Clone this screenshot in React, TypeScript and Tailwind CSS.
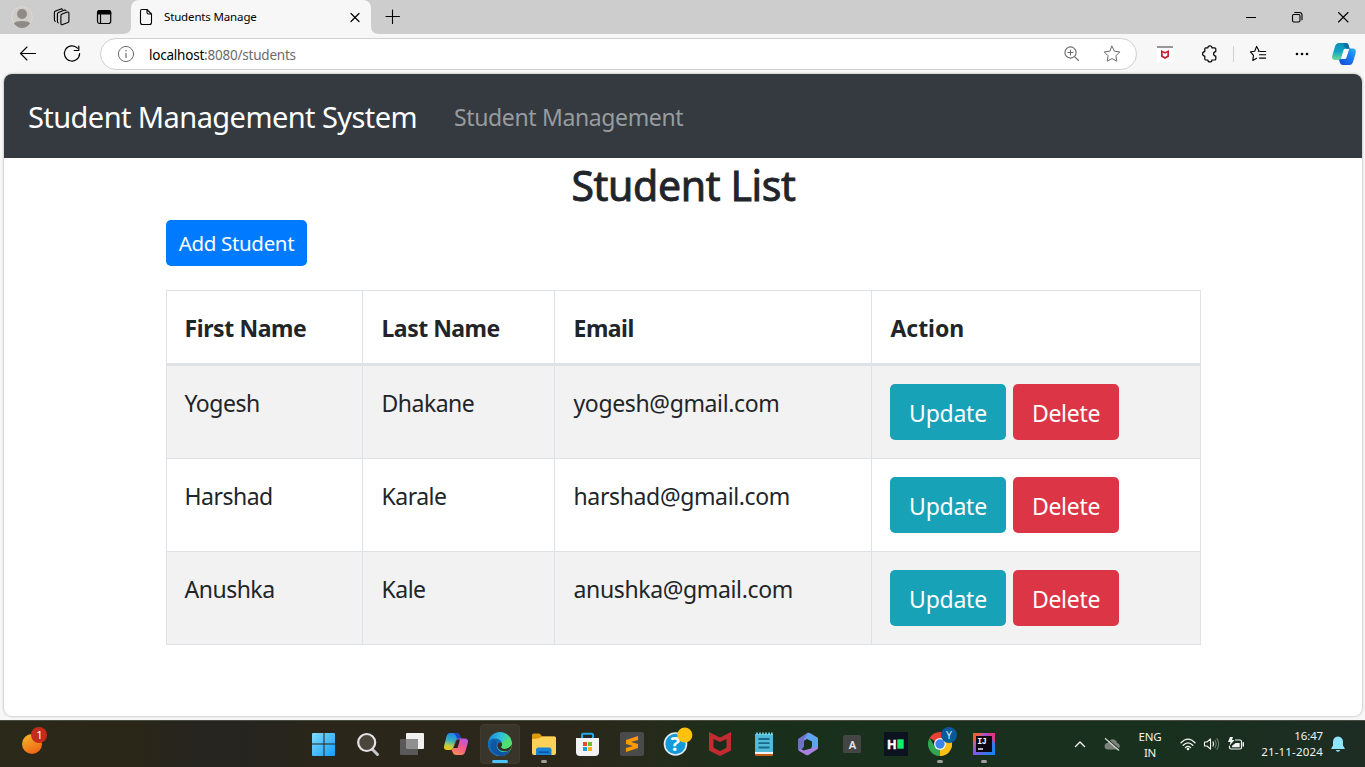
import React from "react";

type IconProps = { children: React.ReactNode; w?: number; h?: number; className?: string };

function Icon({ children, w = 24, h = 24, className }: IconProps) {
  return (
    <svg
      width={w}
      height={h}
      viewBox={`0 0 ${w} ${h}`}
      fill="none"
      stroke="currentColor"
      strokeLinecap="round"
      strokeLinejoin="round"
      className={className}
    >
      {children}
    </svg>
  );
}

function TabStrip() {
  return (
    <div className="flex h-[34px] bg-[#cdcdcd] text-black">
      <div className="flex w-[131px] items-center pl-[10px]">
        <Icon className="shrink-0">
          <circle cx="12" cy="12" r="10.3" fill="#cfcbc6" stroke="#dedbd8" />
          <circle cx="12" cy="9" r="5" fill="#8f8a85" stroke="none" />
          <path d="M3.8 18.2Q6 16 12 16T20.2 18.2Q17 23 12 23T3.8 18.2Z" fill="#8f8a85" stroke="none" />
        </Icon>
        <Icon className="ml-[16px] shrink-0">
          <path d="M11.7 9.3 17.2 7.1Q18.9 6.6 18.9 8.2V16Q18.9 17 18 17.4L12.6 19.6Q10.9 20 10.9 18.4V10.7Q10.9 9.7 11.7 9.3Z" strokeWidth="1.1" />
          <path d="M8.3 17.9Q7.4 17.5 7.4 16.3V9.3Q7.4 8.1 8.5 7.6L14.6 5.1Q15.6 4.8 15.9 5.7" strokeWidth="1.1" />
          <path d="M5.3 16.4Q4.4 16 4.4 14.8V7.8Q4.4 6.6 5.5 6.1L11 3.9Q12 3.6 12.4 4.4" strokeWidth="1.1" />
        </Icon>
        <Icon className="ml-[18px] shrink-0">
          <rect x="5.5" y="5.5" width="13.2" height="13" rx="2.2" strokeWidth="1.2" />
          <path d="M5 9.5V7.5Q5 5 7.5 5H16.7Q19.2 5 19.2 7.5V9.5Z" fill="currentColor" stroke="none" />
          <path d="M8.5 9V18" strokeWidth="1.2" />
        </Icon>
      </div>
      <div className="relative flex w-[240px] items-center rounded-t-[8px] bg-[#f7f7f7]">
        <svg className="absolute -left-[8px] bottom-0" width="8" height="8" viewBox="0 0 8 8">
          <path d="M8 0V8H0Q8 8 8 0Z" fill="#f7f7f7" />
        </svg>
        <svg className="absolute -right-[8px] bottom-0" width="8" height="8" viewBox="0 0 8 8">
          <path d="M0 0V8H8Q0 8 0 0Z" fill="#f7f7f7" />
        </svg>
        <Icon w={14} h={18} className="ml-[8px] shrink-0">
          <path d="M3 1.5H8L12.5 6V14.5Q12.5 16.5 10.5 16.5H3.5Q1.5 16.5 1.5 14.5V3Q1.5 1.5 3 1.5ZM8 1.5V4.5Q8 6 9.5 6H12.5" strokeWidth="1.1" />
        </Icon>
        <span className="ml-[11px] w-[185px] shrink-0 text-[11.5px] leading-4 tracking-[-0.15px] whitespace-nowrap">Students Manage</span>
        <Icon w={12} h={12} className="shrink-0">
          <path d="M2 2.5 10 10.5M10 2.5 2 10.5" strokeWidth="1.2" />
        </Icon>
      </div>
      <div className="flex flex-1 items-center">
        <Icon w={16} h={16} className="ml-[14px]">
          <path d="M1 7.5H14.5M7.5 1V14.5" strokeWidth="1.1" />
        </Icon>
      </div>
      <div className="flex items-center pr-[14px]">
        <Icon w={16} h={16} className="mr-[30px]">
          <path d="M3 8.5H13" strokeLinecap="butt" strokeWidth="1" />
        </Icon>
        <Icon w={16} h={16} className="mr-[30px]">
          <rect x="3.5" y="5.5" width="7.5" height="7.5" rx="1.4" strokeWidth="1.1" />
          <path d="M5.7 3.5H10.5Q13 3.5 13 6V10.7" strokeWidth="1.1" />
        </Icon>
        <Icon w={16} h={16}>
          <path d="M3.5 3.5 13 13M13 3.5 3.5 13" strokeWidth="1.1" />
        </Icon>
      </div>
    </div>
  );
}

function Toolbar() {
  return (
    <div className="flex h-[40px] items-center bg-[#f7f7f7] text-black">
      <Icon w={20} h={20} className="ml-[18px]">
        <path d="M2.8 9.5H17.5M9 3 2.5 9.5 9 16" strokeWidth="1.1" />
      </Icon>
      <Icon w={20} h={20} className="ml-[24px]">
        <path d="M15.5 4.2A7.6 7.6 0 1 0 17.6 9.5M16.8 2.2V6.5H12.2" strokeWidth="1.2" />
      </Icon>
      <div className="ml-[18px] flex h-[32px] w-[1037px] items-center rounded-full border border-[#d0d0d0] bg-white text-[#6b6b6b]">
        <Icon w={18} h={18} className="ml-[16px]">
          <circle cx="9" cy="9" r="7.6" strokeWidth="1" />
          <path d="M9 8.5V12.5" strokeWidth="1.2" />
          <circle cx="9" cy="5.8" r="0.8" fill="currentColor" stroke="none" />
        </Icon>
        <span className="ml-[14px] flex-1 pt-[1px] text-[13.5px] leading-5 tracking-[-0.22px]">
          <span className="text-black">localhost</span>:8080/students
        </span>
        <Icon w={20} h={20} className="mr-[20px]">
          <circle cx="8.5" cy="8.5" r="5.6" strokeWidth="1.1" />
          <path d="M12.8 12.8 16.5 16.5M6 8.5H11M8.5 6V11" strokeWidth="1.1" />
        </Icon>
        <Icon w={20} h={20} className="mr-[14px]">
          <path d="M10 2.2 12.4 7.2 17.8 7.9 13.9 11.8 14.8 17.2 10 14.6 5.2 17.2 6.1 11.8 2.2 7.9 7.6 7.2Z" strokeWidth="1" />
        </Icon>
      </div>
      <svg width="16" height="16" viewBox="0 0 16 16" className="ml-[20px]">
        <rect width="16" height="16" fill="#fff" />
        <rect width="16" height="2" fill="#9b9797" />
        <path d="M4 4 8 6 12 4V10.7L8 13 4 10.7Z" fill="#c8202f" />
        <path d="M5.7 6.6 8 7.8 10.3 6.6V9.6L8 11 5.7 9.6Z" fill="#fff" />
      </svg>
      <Icon w={20} h={20} className="ml-[27px]">
        <path d="M4.8 4.8Q4.8 3.8 5.8 3.8H7.9A2 2 0 0 1 11.9 3.8H14.5Q15.8 3.8 15.8 4.8V7.6A2.2 2.2 0 0 0 15.8 12V15Q15.8 16 14.8 16H11.9A2 2 0 0 1 7.9 16H5.8Q4.8 16 4.8 15V12A2.2 2.2 0 0 1 4.8 7.6Z" strokeWidth="1.2" />
      </Icon>
      <div className="ml-[13px] h-[16px] w-px bg-[#cfcfcf]" />
      <Icon w={20} h={20} className="ml-[14px]">
        <path d="M10.3 7.2H11.2L8.6 2.4 6.7 7.2 2.5 7.8 5.5 11.4 4.8 16.4 8.6 14.3M12.3 7.5H17.7M11.5 10.8H17.7M11.5 14.1H17.7" strokeWidth="1.1" />
      </Icon>
      <svg width="16" height="16" viewBox="0 0 16 16" className="ml-[26px]">
        <circle cx="3" cy="8" r="1.3" />
        <circle cx="8" cy="8" r="1.3" />
        <circle cx="13" cy="8" r="1.3" />
      </svg>
      <svg width="26" height="24" viewBox="0 0 26 24" className="ml-[21px]">
        <defs>
          <linearGradient id="cpa" x1="0" y1="0" x2="0" y2="1">
            <stop offset="0" stopColor="#0a8fb4" />
            <stop offset="0.5" stopColor="#11a5c8" />
            <stop offset="1" stopColor="#6fdc93" />
          </linearGradient>
          <linearGradient id="cpb" x1="0" y1="1" x2="1" y2="0">
            <stop offset="0" stopColor="#1447d8" />
            <stop offset="0.6" stopColor="#1c7df2" />
            <stop offset="1" stopColor="#26b5ee" />
          </linearGradient>
        </defs>
        <path d="M8 1H15Q17 1 17.6 3L18.5 6.5H15Q13 6.5 12.3 9L10.5 15.5Q9.8 18 7.5 18H4Q0.3 18 1.3 13.5L4 4.5Q5 1 8 1Z" fill="url(#cpa)" />
        <path d="M18.5 23H12Q9.5 23 8.8 20.5L8 17.8Q10 17.5 10.6 15.5L13 8.5Q13.7 6.5 16 6.5H21.5Q25.7 6.5 24.7 11L22.2 19.5Q21 23 18.5 23Z" fill="url(#cpb)" />
        <path d="M12.3 9Q13 6.8 15 6.7L18.2 7 15.5 15.5Q15 17 13.5 17H10Z" fill="#fff" />
        <path d="M12 1H15Q17 1 17.6 3L18.6 6.7H15.5Q14 6.7 13 4Z" fill="#0b6fa8" />
      </svg>
    </div>
  );
}

const students = [
  { first: "Yogesh", last: "Dhakane", email: "yogesh@gmail.com" },
  { first: "Harshad", last: "Karale", email: "harshad@gmail.com" },
  { first: "Anushka", last: "Kale", email: "anushka@gmail.com" },
];

function StudentTable() {
  const th = "h-[75px] border-r border-b-[3px] border-[#dee2e6] pl-[18.5px] pt-[2px] text-left font-bold tracking-[-0.5px]";
  const td = "h-[93px] border-r border-b border-[#dee2e6] pl-[18.5px] pt-[19px] align-top";
  return (
    <table className="mt-[24px] w-[1035px] table-fixed border-separate border-spacing-0 border-t border-l border-[#dee2e6] text-[23px] leading-[36px] tracking-[-0.36px]">
      <colgroup>
        <col className="w-[196px]" />
        <col className="w-[192px]" />
        <col className="w-[317px]" />
        <col className="w-[329px]" />
      </colgroup>
      <thead>
        <tr>
          <th className="h-[75px] border-r border-b-[3px] border-[#dee2e6] pt-[2px] pl-[17.5px] text-left font-bold tracking-[-0.4px]">First Name</th>
          <th className={th}>Last Name</th>
          <th className={th}>Email</th>
          <th className="h-[75px] border-r border-b-[3px] border-[#dee2e6] pt-[2px] pl-[18.5px] text-left font-bold tracking-[-0.05px]">Action</th>
        </tr>
      </thead>
      <tbody>
        {students.map((s) => (
          <tr key={s.email} className="odd:bg-[#f2f2f2]">
            <td className="h-[93px] border-r border-b border-[#dee2e6] pt-[19px] pl-[17.5px] align-top tracking-[-0.5px]">{s.first}</td>
            <td className="h-[93px] border-r border-b border-[#dee2e6] pt-[19px] pl-[18.5px] align-top tracking-[-0.5px]">{s.last}</td>
            <td className={td}>{s.email}</td>
            <td className="h-[93px] border-r border-b border-[#dee2e6] pt-[18px] pl-[18px] align-top text-white">
              <div className="flex gap-[7px]">
                <button className="h-[56px] w-[116px] rounded-[5px] bg-[#17a2b8] pt-[2px] tracking-[-0.25px]">Update</button>
                <button className="h-[56px] w-[106px] rounded-[5px] bg-[#dc3545] pt-[2px] tracking-[-0.3px]">Delete</button>
              </div>
            </td>
          </tr>
        ))}
      </tbody>
    </table>
  );
}

function Page() {
  return (
    <div className="h-[646px] bg-[#f7f7f7] pr-[3px] pl-[4px]">
      <div className="h-[642px] overflow-hidden rounded-[8px] bg-white text-[#212529] shadow-[0_0_2px_1px_rgba(0,0,0,0.16)]">
        <nav className="flex h-[84px] items-center bg-[#343a40] pl-[24px] whitespace-nowrap">
          <span className="w-[426px] pt-[1px] text-[29px] leading-[45px] tracking-[-0.57px] text-white">Student Management System</span>
          <span className="pt-[1px] text-[23px] leading-[36px] tracking-[-0.36px] text-[#999c9f]">Student Management</span>
        </nav>
        <main className="flex flex-col items-start pl-[162px]">
          <h2 className="h-[62px] w-[1035px] pt-[1px] text-center text-[41px] leading-[52px] font-normal tracking-[-0.35px] [-webkit-text-stroke:0.9px_#212529]">
            Student List
          </h2>
          <button className="h-[46px] w-[141px] rounded-[5px] bg-[#007bff] text-[20.5px] leading-[30px] tracking-[-0.33px] text-white">
            Add Student
          </button>
          <StudentTable />
        </main>
      </div>
    </div>
  );
}

type AppEntry = { name: string; art: React.ReactNode; active?: boolean; running?: boolean };

const apps: AppEntry[] = [
  {
    name: "Start",
    art: (
      <g fill="url(#win)">
        <path d="M3 3H13.5V13.5H2V4Q2 3 3 3Z M14.5 3H24Q25 3 25 4V13.5H14.5Z M2 14.5H13.5V26H3Q2 26 2 25Z M14.5 14.5H25V25Q25 26 24 26H14.5Z" />
      </g>
    ),
  },
  {
    name: "Search",
    art: (
      <g>
        <path d="M18.5 19.5 23.5 24.5" stroke="#c5c7cb" strokeWidth="3" strokeLinecap="round" />
        <circle cx="12.7" cy="12.5" r="8.5" fill="#4a463b" stroke="#e2e3e6" strokeWidth="2.2" />
      </g>
    ),
  },
  {
    name: "Task view",
    art: (
      <g>
        <rect x="8" y="3" width="18" height="16" rx="1" fill="#f1f1f1" />
        <rect x="2" y="9" width="18" height="16" rx="1" fill="#59595a" />
        <path d="M8 9H19Q20 9 20 10V19H9Q8 19 8 18Z" fill="#8f8f8f" />
      </g>
    ),
  },
  {
    name: "Copilot",
    art: (
      <g>
        <path d="M8 3H14.5Q17 3 18 6L19 9H16.5Q14 9 13.3 11.5L11.3 17.5Q10.5 20 8 20H5.5Q1 20 2.2 15.5L4.5 6.5Q5.5 3 8 3Z" fill="url(#pilotA)" />
        <path d="M12 3H14.5Q17 3 18 6L19 9H16Q14.5 8 13.8 5.5Z" fill="#1b45c4" />
        <path d="M19.5 25H14Q11.5 25 10.5 22L9.5 19.6Q11 19 11.6 17L14 10.5Q15 8.5 17.5 8.5H22.5Q27 8.5 25.8 13L23.5 21Q22.5 25 19.5 25Z" fill="url(#pilotB)" />
        <path d="M14.8 9.5H18L15.5 18H11.5Z" fill="#2b2518" />
      </g>
    ),
  },
  {
    name: "Edge",
    active: true,
    art: (
      <g>
        <circle cx="14" cy="14" r="12" fill="url(#edgeA)" />
        <path d="M2 14Q2.5 8.5 8.5 8.5Q15 8.7 16 13.3Q13 10.7 11 14.5Q9.7 18 13.5 21Q18 23.8 24.3 20Q20.5 26 14 26Q3 25 2 14Z" fill="#1267b5" />
        <path d="M8.5 9.5Q4 12.5 5 18Q7 24.5 14.5 26Q21 26 24.3 20Q18 23.8 13.5 21Q9 17.8 11 14Z" fill="#1055a2" />
        <path d="M15.5 12.8Q17 14.4 15.5 16.6Q15 18.6 19 18.7Q24 18.3 26 14Q25.8 19 22.3 20.7Q16 22.5 12.7 19.2Q10 15.8 12.3 13Q14 11.6 15.5 12.8Z" fill="#353022" />
        <path d="M15.5 12.8Q17 14.4 15.6 16.5Q15 18.5 19 18.7Q24.5 18.2 26 13.5L22 9Z" fill="#4fdf70" />
      </g>
    ),
  },
  {
    name: "File Explorer",
    running: true,
    art: (
      <g>
        <path d="M2 5Q2 3.5 3.5 3.5H9Q10 3.5 11 5L12 6.5H24Q26 6.5 26 8.5V15H2Z" fill="#dc9a0a" />
        <path d="M2 9Q10 8.5 12 6.5H24.5Q26 6.5 26 8V23Q26 25 24 25H4Q2 25 2 23Z" fill="#fbd257" />
        <path d="M6 25V20Q6 17.5 8.5 17.5H19Q21.5 17.5 21.5 20V25Z" fill="#1683d7" />
        <path d="M8.5 22.2H19" stroke="#0b56a8" strokeWidth="1.6" />
      </g>
    ),
  },
  {
    name: "Store",
    art: (
      <g>
        <path d="M8 9V5Q8 3.8 9.2 3.8H17.8Q19 3.8 19 5V9" fill="none" stroke="#2aa9e8" strokeWidth="2" />
        <path d="M2 8H25V22Q25 26 21 26H6Q2 26 2 22Z" fill="#f3f3f4" />
        <path d="M9 12H13V16H9Z" fill="#e54b26" />
        <path d="M14 12H18V16H14Z" fill="#74b728" />
        <path d="M9 17H13V21H9Z" fill="#169fe2" />
        <path d="M14 17H18V21H14Z" fill="#f7b410" />
      </g>
    ),
  },
  {
    name: "Editor",
    art: (
      <g>
        <rect x="2" y="2" width="24" height="24" rx="2" fill="#4a4a4b" />
        <path d="M20 6 8 10V14L15 16 8 18V22L20 18V14L13 12 20 10Z" fill="#ff9a06" />
      </g>
    ),
  },
  {
    name: "Help",
    art: (
      <g>
        <circle cx="13.5" cy="14" r="11" fill="#1499da" stroke="#e7eef2" strokeWidth="1.6" />
        <text x="13.2" y="21.3" textAnchor="middle" fontSize="20" fontWeight="700" fill="#fff">?</text>
        <circle cx="22.8" cy="5" r="7.6" fill="#ffc20c" />
      </g>
    ),
  },
  {
    name: "Shield",
    art: (
      <g>
        <path d="M3 2 14 7.5 25 2V20.5L14 26 3 20.5Z" fill="#c22b30" />
        <path d="M7.5 9 14 12 20.5 9V17.8L14 21 7.5 17.8Z" fill="#1c2c1a" />
      </g>
    ),
  },
  {
    name: "Notepad",
    art: (
      <g>
        <path d="M5 22H23V25Q23 26 22 26H6Q5 26 5 25Z" fill="#c25b1b" />
        <rect x="5" y="21" width="18" height="3" fill="#f2f2f2" />
        <path d="M5 4H23V22H5Z" fill="#51bad8" />
        <path d="M7 2.5V5M10 2.5V5M13 2.5V5M16 2.5V5M19 2.5V5M21.8 2.5V5" stroke="#7bdcee" strokeWidth="1.6" />
        <path d="M8.5 9H19.5M8.5 13.2H19.5M8.5 17.5H19.5" stroke="#166b8b" strokeWidth="1.8" />
      </g>
    ),
  },
  {
    name: "Microsoft 365",
    art: (
      <g>
        <path d="M14 2.5 17 3.5 24 8V15L17.5 13 14 8.5 9 12V18L6 19.5 4.2 17V9Z" fill="#8087dc" />
        <path d="M14 3 24 8V18.5L19.5 21.5 17.5 19.5V12L11.5 8.5Z" fill="#5ca6f0" />
        <path d="M4 17 9.5 20.5 24 16.5V18.5L14.5 25Q13.5 25.5 12 25L4.5 20.5Z" fill="#a982e0" />
        <path d="M4.5 9.5 14 3 10 8V17L5.5 19.8 4 18Z" fill="#6d72c4" />
        <path d="M13 9 18 11.5V16.5L13.5 19 10 17V11Z" fill="#18301c" />
      </g>
    ),
  },
  {
    name: "Keyboard",
    art: (
      <g>
        <rect x="5" y="5" width="18" height="18" rx="1.5" fill="#454545" />
        <text x="14.5" y="19" textAnchor="middle" fontSize="11" fontWeight="600" fill="#e7eaec">A</text>
      </g>
    ),
  },
  {
    name: "H",
    art: (
      <g>
        <rect x="2" y="2" width="24" height="24" fill="#0c1320" />
        <text x="9.9" y="18.5" textAnchor="middle" fontSize="12.6" fontWeight="700" fill="#fff" stroke="#fff" strokeWidth="0.5" fontFamily="Liberation Sans, sans-serif">H</text>
        <rect x="15.3" y="9.3" width="6.4" height="9.4" fill="#10ef67" />
      </g>
    ),
  },
  {
    name: "Chrome",
    running: true,
    art: (
      <g>
        <path d="M14 14 3.6 8A12 12 0 0 1 24.4 8Z" fill="#e94235" />
        <path d="M14 14 24.4 8A12 12 0 0 1 14 26Z" fill="#fbc116" />
        <path d="M14 14 14 26A12 12 0 0 1 3.6 8L9 17Z" fill="#31a552" />
        <path d="M14 8H24.4A12 12 0 0 1 26 14Q26 20 21 23.7L14 26 19.2 17Z" fill="#fbc116" />
        <circle cx="14" cy="14" r="6" fill="#f3f6f4" />
        <circle cx="14" cy="14" r="4.7" fill="#3e82ee" />
        <circle cx="23" cy="5" r="8" fill="#08599b" />
        <text x="23" y="9" textAnchor="middle" fontSize="10.5" fill="#d7edf7">Y</text>
      </g>
    ),
  },
  {
    name: "IntelliJ",
    running: true,
    art: (
      <g>
        <rect x="3" y="3" width="22" height="22" fill="url(#ij)" />
        <path d="M3 3H12L3 13Z" fill="#ef5b42" />
        <path d="M25 3V13L16 3Z" fill="#d8388c" />
        <rect x="6" y="6" width="16" height="16" fill="#0d0714" />
        <text x="7.3" y="13.7" fontSize="8.2" fontWeight="700" fill="#fff" fontFamily="Liberation Mono, monospace" letterSpacing="-0.4">IJ</text>
        <path d="M8 19H13" stroke="#fff" strokeWidth="1.4" />
      </g>
    ),
  },
];

function Gradients() {
  return (
    <svg width="0" height="0" className="absolute">
      <defs>
        <linearGradient id="win" x1="0" y1="0" x2="1" y2="1">
          <stop offset="0" stopColor="#7fdcff" />
          <stop offset="1" stopColor="#149cf6" />
        </linearGradient>
        <linearGradient id="pilotA" x1="0.5" y1="0" x2="0.3" y2="1">
          <stop offset="0" stopColor="#1e83ea" />
          <stop offset="0.45" stopColor="#33b1c4" />
          <stop offset="0.75" stopColor="#b5d04a" />
          <stop offset="1" stopColor="#f6c513" />
        </linearGradient>
        <linearGradient id="pilotB" x1="0.8" y1="0" x2="0.3" y2="1">
          <stop offset="0" stopColor="#b556ea" />
          <stop offset="0.5" stopColor="#f2588f" />
          <stop offset="1" stopColor="#fb8a55" />
        </linearGradient>
        <linearGradient id="edgeA" x1="0" y1="0.3" x2="1" y2="0.5">
          <stop offset="0" stopColor="#1d8bd8" />
          <stop offset="0.5" stopColor="#2fbfe0" />
          <stop offset="1" stopColor="#5be35e" />
        </linearGradient>
        <linearGradient id="ij" x1="0" y1="0" x2="1" y2="0.8">
          <stop offset="0" stopColor="#f78a2a" />
          <stop offset="0.4" stopColor="#9b4ee0" />
          <stop offset="1" stopColor="#0f86ef" />
        </linearGradient>
        <linearGradient id="sun" x1="0.2" y1="0" x2="0.7" y2="1">
          <stop offset="0" stopColor="#f5b729" />
          <stop offset="1" stopColor="#ee6211" />
        </linearGradient>
      </defs>
    </svg>
  );
}

function AppButton({ entry }: { entry: AppEntry }) {
  return (
    <div className="flex w-[44px] justify-center">
      <div
        className={
          entry.active
            ? "relative flex h-[40px] w-[40px] justify-center rounded-[4px] border border-[#403c30] bg-[#39352a] pt-[5px]"
            : "relative flex h-[40px] w-[40px] justify-center pt-[6px]"
        }
      >
        <svg width="28" height="28" viewBox="0 0 28 28" className="shrink-0 overflow-visible">
          {entry.art}
        </svg>
        {entry.active && <div className="absolute bottom-0 h-[3px] w-[16px] rounded-full bg-[#4cc2ff]" />}
        {entry.running && <div className="absolute bottom-[1px] h-[3px] w-[6px] rounded-full bg-[#a09f9b]" />}
      </div>
    </div>
  );
}

function Taskbar() {
  return (
    <div className="flex h-[47px] border-t border-[#4a4d42] bg-[linear-gradient(90deg,#2b2919_0%,#2a2618_10%,#262520_15%,#25241f_18%,#2a261a_23%,#2b271a_40%,#272a1a_47%,#1b2f1b_54%,#18301c_65%,#18301e_85%,#1e2c23_100%)] text-[#f2f4f2]">
      <Gradients />
      <div className="w-[302px] pt-[5px] pl-[20px]">
        <svg width="28" height="30" viewBox="0 0 28 30">
          <circle cx="12" cy="18" r="10" fill="url(#sun)" />
          <circle cx="19" cy="9" r="8" fill="#c42b1c" />
          <text x="19.6" y="13.2" textAnchor="middle" fontSize="11.5" fill="#fff">1</text>
        </svg>
      </div>
      <div className="flex pt-[3px]">
        {apps.map((a) => (
          <AppButton key={a.name} entry={a} />
        ))}
      </div>
      <div className="ml-auto flex items-center text-[11.5px] leading-4">
        <Icon w={14} h={14} className="mr-[16px]">
          <path d="M2.5 9.5 7 5 11.5 9.5" strokeWidth="1.4" />
        </Icon>
        <svg width="18" height="16" viewBox="0 0 18 16" className="mr-[16px]">
          <path d="M5 13.5Q1.5 13.3 1.5 10Q1.8 7 5 6.8Q6.5 3 10 3.2Q13.5 3.8 14 7Q17 7.8 16.8 10.5Q16.3 13.5 13.5 13.5Z" fill="#7a8279" />
          <path d="M2.8 1.6 16.8 13.9" stroke="#18301e" strokeWidth="1.2" />
          <path d="M2 2.2 16 14.5" stroke="#d6d9d6" strokeWidth="1.2" />
        </svg>
        <div className="w-[26px] pt-[1px] text-center tracking-[-0.2px]">
          <div>ENG</div>
          <div>IN</div>
        </div>
        <Icon w={18} h={16} className="ml-[16px]">
          <path d="M2 6.8Q9 -0.5 16 6.8M4.2 9.3Q9 4.3 13.8 9.3M6.4 11.6Q9 9 11.6 11.6" strokeWidth="1.3" />
          <circle cx="9" cy="13" r="1.3" fill="currentColor" stroke="none" />
        </Icon>
        <Icon w={18} h={16} className="ml-[6px]">
          <path d="M1.5 6H4L7.5 2.8V13.2L4 10H1.5Z" strokeWidth="1.1" />
          <path d="M10 6Q11.2 8 10 10" strokeWidth="1.2" />
          <path d="M12 4.3Q14.3 8 12 11.7M14 2.6Q17.3 8 14 13.4" strokeWidth="1.1" stroke="#6c7a6e" />
        </Icon>
        <Icon w={18} h={16} className="ml-[6px]">
          <path d="M8.5 4H13Q14.5 4 14.5 5.5V11.5Q14.5 13 13 13H4Q2.5 13 2.5 11.5V10" strokeWidth="1.2" />
          <path d="M16.3 6.8V10" strokeWidth="1.4" />
          <path d="M8.5 7H12.7V11.2H4.8L5.2 9.8Z" fill="currentColor" stroke="none" />
          <path d="M3 1 1 6H3.5L2.7 9.5 7.5 4H5L6 1Z" fill="currentColor" stroke="none" />
        </Icon>
        <div className="ml-[12px] w-[66px] text-right tracking-[0.18px] whitespace-nowrap">
          <div className="tracking-[-0.15px]">16:47</div>
          <div>21-11-2024</div>
        </div>
        <svg width="16" height="18" viewBox="0 0 16 18" className="mr-[19px] ml-[7px]" fill="#8fe5ff">
          <path d="M8 1.5Q13 2 13 7V10.5L14.7 13.2V14H1.3V13.2L3 10.5V7Q3 2 8 1.5ZM5.8 15H10.2Q9.8 16.7 8 16.7T5.8 15Z" />
        </svg>
      </div>
    </div>
  );
}

export default function App() {
  return (
    <div className="h-[767px] w-[1365px] overflow-hidden bg-[#f7f7f7] font-['Noto_Sans','Open_Sans',sans-serif]">
      <TabStrip />
      <Toolbar />
      <Page />
      <Taskbar />
    </div>
  );
}
